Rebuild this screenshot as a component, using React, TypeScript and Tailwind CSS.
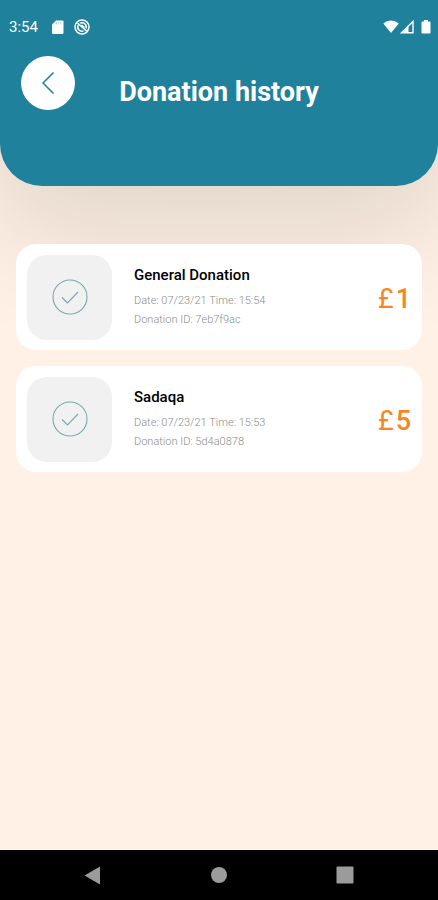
type Donation = {
  id: string;
  title: string;
  date: string;
  time: string;
  amount: number;
};

const donations: Donation[] = [
  { id: '7eb7f9ac', title: 'General Donation', date: '07/23/21', time: '15:54', amount: 1 },
  { id: '5d4a0878', title: 'Sadaqa', date: '07/23/21', time: '15:53', amount: 5 },
];

function StatusBar() {
  return (
    <div className="flex h-[54px] items-center justify-between pr-1 pl-[9px] text-white">
      <div className="flex items-center">
        <span className="text-[15px] leading-5">3:54</span>
        <svg className="ml-3 h-4 w-4" viewBox="0 0 16 16" fill="currentColor" aria-hidden="true">
          <path d="M6 1.500H12.500Q13.500 1.500 13.500 2.500V13.500Q13.500 15 12.500 15H3Q2 15 2 13.500V5.500Z" />
          <path d="M6.500 3v2.500M8.700 3v2.500M10.900 3v2.500" stroke="#1f819b" strokeOpacity="0.6" strokeWidth="0.6" />
        </svg>
        <svg className="ml-2 h-4 w-4" viewBox="0 0 16 16" fill="none" stroke="currentColor" aria-hidden="true">
          <circle cx="8" cy="8" r="7" strokeWidth="1.5" />
          <path d="M4.200 6A4.300 4.300 0 0 0 9.500 12M6 4.200A4.300 4.300 0 0 1 12 9.500" strokeWidth="1.5" />
          <path d="M3.500 4L12.500 12M7.500 6L10.500 8.500" strokeWidth="1.600" />
        </svg>
      </div>
      <div className="flex items-center">
        <svg className="h-4 w-4" viewBox="0 0 16 16" fill="currentColor" aria-hidden="true">
          <path d="M8 14L0.300 4.500Q3.500 1.500 8 1.500T15.700 4.500Z" />
        </svg>
        <svg className="h-4 w-4" viewBox="0 0 16 16" fill="none" stroke="currentColor" aria-hidden="true">
          <path d="M14 2.500V13.800H2.500Z" strokeWidth="1.400" />
          <path d="M9.500 7V13.800H3.500Z" fill="currentColor" stroke="none" />
        </svg>
        <svg className="ml-[3px] h-4 w-4" viewBox="0 0 16 16" fill="currentColor" aria-hidden="true">
          <path d="M6 1h4v1.500h1.500Q12.500 2.500 12.500 3.500V13.500Q12.500 14.500 11.500 14.500H4.500Q3.500 14.500 3.500 13.500V3.500Q3.500 2.500 4.500 2.500H6Z" />
        </svg>
      </div>
    </div>
  );
}

function Header() {
  return (
    <header className="h-[186px] rounded-b-[42px] bg-[#1f819b] shadow-[0_40px_120px_10px_rgba(0,0,0,0.12)]">
      <StatusBar />
      <div className="mt-0.5 grid grid-cols-[54px_1fr_54px] px-[21px]">
        <button
          type="button"
          aria-label="Back"
          className="flex size-[54px] items-center justify-center rounded-full bg-white text-[#1f819b]"
        >
          <svg className="h-6 w-4" viewBox="0 0 16 24" fill="none" stroke="currentColor" strokeWidth="1.5" aria-hidden="true">
            <path d="M13.500 1.500L3 12L13.500 22.500" />
          </svg>
        </button>
        <h1 className="pt-5 text-center text-[27px] leading-8 font-bold text-white">Donation history</h1>
      </div>
    </header>
  );
}

function DonationCard({ donation }: { donation: Donation }) {
  return (
    <li className="flex h-[106px] items-center rounded-[20px] bg-white pr-[11px] pl-[11px]">
      <div className="flex size-[85px] shrink-0 items-center justify-center rounded-[20px] bg-[#f1f1f1]">
        <svg className="size-9" viewBox="0 0 36 36" fill="none" stroke="#7ba9ad" aria-hidden="true">
          <circle cx="18" cy="18" r="17" strokeWidth="1.1" />
          <path d="M10 18.500L15.500 24L26 13" strokeWidth="1.1" />
        </svg>
      </div>
      <div className="ml-[22px] min-w-0 flex-1">
        <h2 className="text-[15px] leading-5 font-medium text-black">{donation.title}</h2>
        <p className="mt-1.5 text-[11px] leading-[19px] font-light text-[#8c8c8c]">
          Date: {donation.date} Time: {donation.time}
        </p>
        <p className="text-[11px] leading-[19px] font-light text-[#8c8c8c]">Donation ID: {donation.id}</p>
      </div>
      <span className="flex items-baseline gap-0.5 pt-1 text-[27px] leading-8 text-[#f9851f]">
        <span>£</span>
        <span className="font-medium">{donation.amount}</span>
      </span>
    </li>
  );
}

function NavBar() {
  return (
    <nav className="flex h-[50px] items-center justify-center gap-[102px] bg-black text-[#9b9b9b]">
      <button type="button" aria-label="Back">
        <svg className="size-6" viewBox="0 0 24 24" fill="currentColor">
          <path d="M19 3.500V21.500L3.500 12.500Z" />
        </svg>
      </button>
      <button type="button" aria-label="Home">
        <svg className="size-6" viewBox="0 0 24 24" fill="currentColor">
          <circle cx="12" cy="12" r="8" />
        </svg>
      </button>
      <button type="button" aria-label="Recent apps">
        <svg className="size-6" viewBox="0 0 24 24" fill="currentColor">
          <rect x="3.500" y="3.500" width="17" height="17" rx="1" />
        </svg>
      </button>
    </nav>
  );
}

export default function App() {
  return (
    <div className="flex min-h-screen flex-col overflow-hidden bg-[#fff1e5] font-['Roboto',sans-serif]">
      <Header />
      <main className="relative flex-1 px-4 pt-[58px] pb-4">
        <ul className="flex flex-col gap-4">
          {donations.map((donation) => (
            <DonationCard key={donation.id} donation={donation} />
          ))}
        </ul>
      </main>
      <NavBar />
    </div>
  );
}
